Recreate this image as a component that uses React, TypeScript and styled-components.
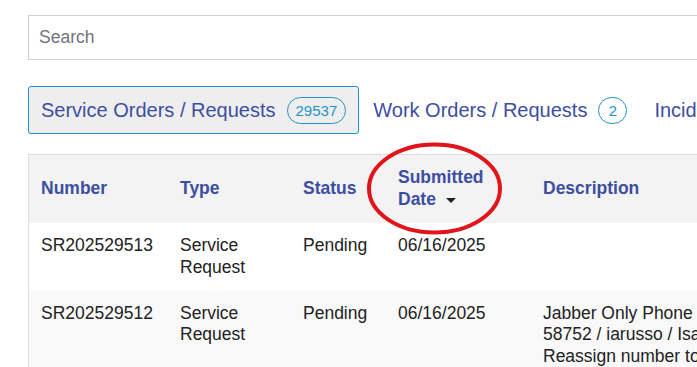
import React from "react";
import styled, { createGlobalStyle } from "styled-components";

const GlobalStyle = createGlobalStyle`
  html, body {
    margin: 0;
    padding: 0;
    background: #ffffff;
    overflow: hidden;
  }
  body {
    font-family: "Liberation Sans", Arial, sans-serif;
  }
`;

const Page = styled.div`
  position: relative;
  width: 1100px;
  padding: 15px 0 0 28px;
  box-sizing: border-box;
`;

const SearchInput = styled.input`
  display: block;
  width: 900px;
  height: 45px;
  box-sizing: border-box;
  border: 1px solid #cfcfcf;
  border-radius: 0;
  padding: 0 10px;
  font-family: "Liberation Sans", Arial, sans-serif;
  font-size: 17.5px;
  color: #333;
  outline: none;
  &::placeholder {
    color: #6f747a;
  }
`;

const TabBar = styled.div`
  display: flex;
  gap: 1px;
  margin-top: 26px;
`;

const Tab = styled.div<{ $active?: boolean }>`
  display: flex;
  align-items: center;
  height: 48px;
  box-sizing: border-box;
  padding: 0 12px;
  border: 1px solid ${(p) => (p.$active ? "#1f93c8" : "transparent")};
  border-radius: 3px;
  background: ${(p) => (p.$active ? "#eeeeee" : "transparent")};
  color: #3d4ea1;
  font-size: 20px;
  white-space: nowrap;
`;

const Badge = styled.span`
  display: inline-flex;
  align-items: center;
  justify-content: center;
  margin-left: 11px;
  height: 27px;
  min-width: 29px;
  box-sizing: border-box;
  padding: 0 8px;
  border: 1px solid #1f93c8;
  border-radius: 14px;
  color: #1f93c8;
  font-size: 15px;
`;

const Table = styled.table`
  margin-top: 20px;
  border-collapse: separate;
  border-spacing: 0;
  table-layout: fixed;
  width: 860px;
  border-top: 1px solid #dddddd;
  border-left: 1px solid #dddddd;
  font-size: 17.5px;
  line-height: 1.25;
`;

const HeadCell = styled.th`
  text-align: left;
  vertical-align: middle;
  padding: 12px;
  background: #f3f3f3;
  color: #3d4ea1;
  font-weight: bold;
`;

const Row = styled.tr<{ $shaded?: boolean }>`
  background: ${(p) => (p.$shaded ? "#f9f9f9" : "#ffffff")};
`;

const Cell = styled.td`
  vertical-align: top;
  padding: 12px;
  color: #222222;
`;

const Caret = styled.span`
  display: inline-block;
  width: 0;
  height: 0;
  margin-left: 10px;
  vertical-align: middle;
  border-left: 5px solid transparent;
  border-right: 5px solid transparent;
  border-top: 5px solid #222222;
`;

const Annotation = styled.svg`
  position: absolute;
  left: 365px;
  top: 140px;
  pointer-events: none;
`;

const columns = [139, 123, 95, 145, 279, 79];

const rows = [
  {
    number: "SR202529513",
    type: "Service Request",
    status: "Pending",
    date: "06/16/2025",
    description: "",
  },
  {
    number: "SR202529512",
    type: "Service Request",
    status: "Pending",
    date: "06/16/2025",
    description:
      "Jabber Only Phone Extension 58752 / iarusso / Isabella Russo Reassign number to new user",
  },
];

export default function App() {
  return (
    <>
      <GlobalStyle />
      <Page>
        <SearchInput placeholder="Search" />
        <TabBar>
          <Tab $active>
            Service Orders / Requests<Badge>29537</Badge>
          </Tab>
          <Tab>
            Work Orders / Requests<Badge>2</Badge>
          </Tab>
          <Tab>
            Incidents<Badge>0</Badge>
          </Tab>
        </TabBar>
        <Table>
          <colgroup>
            {columns.map((w, i) => (
              <col key={i} style={{ width: w }} />
            ))}
          </colgroup>
          <thead>
            <tr>
              <HeadCell>Number</HeadCell>
              <HeadCell>Type</HeadCell>
              <HeadCell>Status</HeadCell>
              <HeadCell>
                Submitted Date
                <Caret />
              </HeadCell>
              <HeadCell>Description</HeadCell>
              <HeadCell>Actions</HeadCell>
            </tr>
          </thead>
          <tbody>
            {rows.map((r, i) => (
              <Row key={r.number} $shaded={i % 2 === 1}>
                <Cell>{r.number}</Cell>
                <Cell>{r.type}</Cell>
                <Cell>{r.status}</Cell>
                <Cell>{r.date}</Cell>
                <Cell>{r.description}</Cell>
                <Cell></Cell>
              </Row>
            ))}
          </tbody>
        </Table>
        <Annotation width="140" height="98" viewBox="0 0 140 98">
          <ellipse
            cx="69.5"
            cy="48.5"
            rx="65.5"
            ry="44"
            fill="none"
            stroke="#e2141b"
            strokeWidth="4"
          />
        </Annotation>
      </Page>
    </>
  );
}
